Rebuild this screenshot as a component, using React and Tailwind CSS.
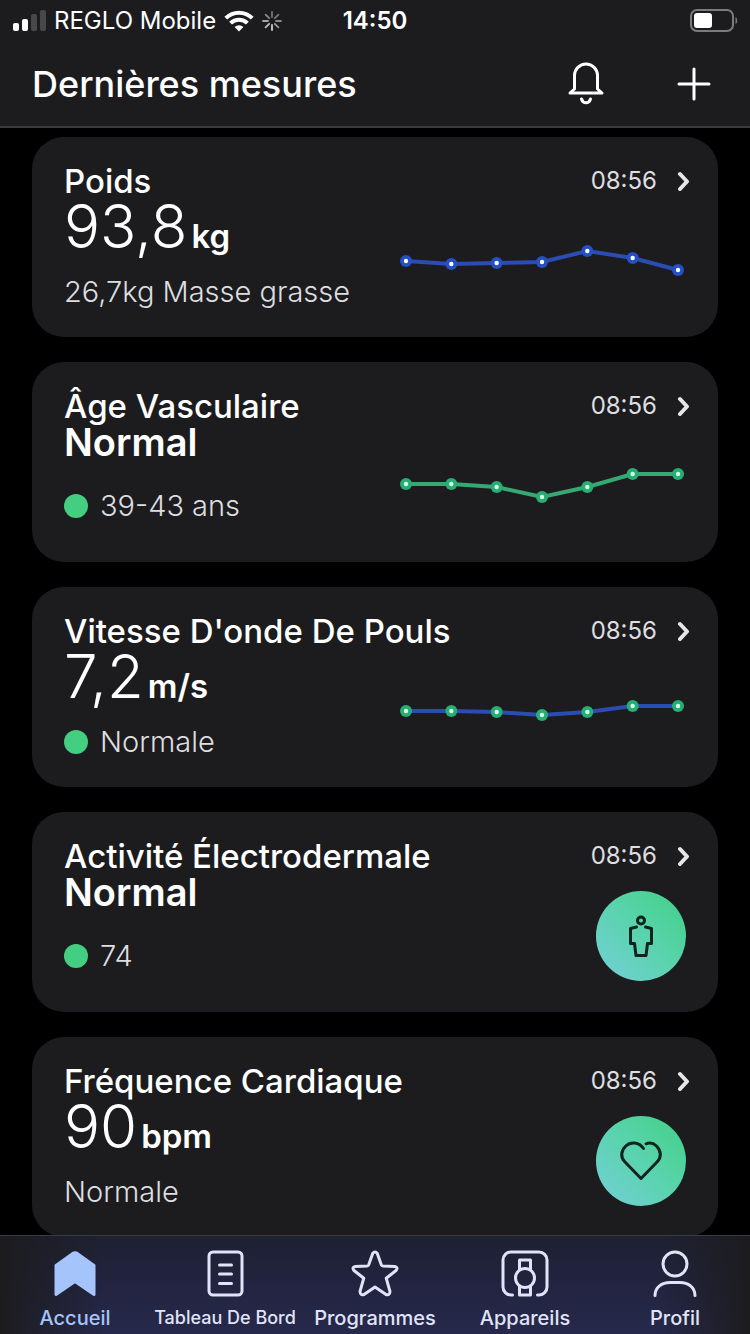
import React from "react";

const measures = [
  {
    title: "Poids",
    value: "93,8",
    unit: "kg",
    detail: "26,7kg Masse grasse",
    chart: { line: "#2b4cb3", dot: "#2450c4", center: "#ffffff", points: [40, 43, 42, 41, 30, 37, 49] },
  },
  {
    title: "Âge Vasculaire",
    status: "Normal",
    detail: "39-43 ans",
    dot: true,
    chart: { line: "#36a873", dot: "#27ae74", center: "#d5ffe6", points: [38, 38, 41, 51, 41, 28, 28] },
  },
  {
    title: "Vitesse D'onde De Pouls",
    value: "7,2",
    unit: "m/s",
    detail: "Normale",
    dot: true,
    chart: { line: "#2b4cb3", dot: "#27ae74", center: "#d5ffe6", points: [40, 40, 41, 44, 41, 35, 35] },
  },
  {
    title: "Activité Électrodermale",
    status: "Normal",
    detail: "74",
    dot: true,
    icon: "body",
  },
  {
    title: "Fréquence Cardiaque",
    value: "90",
    unit: "bpm",
    detail: "Normale",
    icon: "heart",
  },
];

const tabs = [
  { label: "Accueil", icon: "home", active: true },
  { label: "Tableau De Bord", icon: "board", long: true },
  { label: "Programmes", icon: "star" },
  { label: "Appareils", icon: "watch" },
  { label: "Profil", icon: "user" },
];

const StatusBar = () => {
  return (
    <div className="grid h-[42px] grid-cols-[1fr_auto_1fr] items-center px-3 text-2xl">
      <div className="flex items-center gap-2">
        <svg width="34" height="22" viewBox="0 0 34 22" fill="#ffffff">
          <rect x="1" y="13" width="6" height="8" rx="2" />
          <rect x="10" y="9" width="6" height="12" rx="2" />
          <rect x="19" y="4" width="6" height="17" rx="2" fill="#48484a" />
          <rect x="28" y="0" width="6" height="21" rx="2" fill="#48484a" />
        </svg>
        <span className="whitespace-nowrap">REGLO Mobile</span>
        <svg width="30" height="22" viewBox="0 0 30 22" fill="none" stroke="#ffffff" strokeWidth="4">
          <path d="M1.8 8.2a18.6 18.6 0 0 1 26.4 0" />
          <path d="M6.6 13.2a11.8 11.8 0 0 1 16.8 0" />
          <path d="M15 21.5l-4.4-4.4a6.2 6.2 0 0 1 8.8 0z" fill="#ffffff" stroke="none" />
        </svg>
        <svg
          width="20"
          height="20"
          viewBox="0 0 20 20"
          stroke="#a5a5a7"
          strokeWidth="1.8"
          strokeLinecap="round"
        >
          <path d="M10 1v5" stroke="#77777a" />
          <path d="M16.4 3.6l-3.6 3.6" stroke="#77777a" />
          <path d="M19 10h-5" stroke="#88888a" />
          <path d="M16.4 16.4l-3.6-3.6" stroke="#98989a" />
          <path d="M10 19v-5" stroke="#d0d0d2" />
          <path d="M3.6 16.4l3.6-3.6" stroke="#c0c0c2" />
          <path d="M1 10h5" />
          <path d="M3.6 3.6l3.6 3.6" stroke="#88888a" />
        </svg>
      </div>
      <span className="font-semibold">14:50</span>
      <svg className="justify-self-end" width="48" height="24" viewBox="0 0 48 24">
        <rect x="1" y="1" width="42" height="21" rx="6" fill="none" stroke="#7b7b7d" strokeWidth="2" />
        <rect x="4" y="4" width="18" height="15" rx="3" fill="#ffffff" />
        <path d="M45.500 8c2.300 1 2.300 6 0 7z" fill="#7b7b7d" />
      </svg>
    </div>
  );
};

const Header = () => {
  return (
    <header className="border-b-2 border-[#3b3b3e] bg-[#1c1c1e]">
      <StatusBar />
      <div className="flex h-[84px] items-center justify-between pr-[38px] pl-8">
        <h1 className="text-4xl leading-10 font-medium">Dernières mesures</h1>
        <div className="flex items-center gap-[68px]">
          <button type="button" aria-label="Notifications">
            <svg
              width="44"
              height="44"
              viewBox="0 0 44 44"
              fill="none"
              stroke="#ffffff"
              strokeWidth="3"
              strokeLinecap="round"
              strokeLinejoin="round"
            >
              <path d="M10.500 27V13.500a11.500 11.500 0 0 1 23 0V27l4.500 4H6z" />
              <path d="M17.500 37c1.500 5 7.500 5 9 0" />
            </svg>
          </button>
          <button type="button" aria-label="Ajouter">
            <svg
              width="36"
              height="36"
              viewBox="0 0 36 36"
              stroke="#ffffff"
              strokeWidth="3"
              strokeLinecap="round"
            >
              <path d="M18 3v30M3 18h30" />
            </svg>
          </button>
        </div>
      </div>
    </header>
  );
};

const Chart = ({ line, dot, center, points }) => {
  const coords = points.map((y, i) => [6 + (i * 272) / 6, y]);

  return (
    <svg className="mt-5 shrink-0" width="286" height="80" viewBox="0 0 286 80">
      <polyline
        points={coords.map((c) => c.join(",")).join(" ")}
        fill="none"
        stroke={line}
        strokeWidth="4"
      />
      {coords.map(([x, y]) => (
        <g key={x}>
          <circle cx={x} cy={y} r="6" fill={dot} />
          <circle cx={x} cy={y} r="2.2" fill={center} />
        </g>
      ))}
    </svg>
  );
};

const Badge = ({ icon }) => {
  return (
    <div className="mt-[15px] flex size-[90px] shrink-0 items-center justify-center rounded-full bg-linear-to-tr from-[#74cfd8] via-[#5ad3ae] to-[#3fd184]">
      <svg
        width="44"
        height="44"
        viewBox="0 0 44 44"
        fill="none"
        stroke="#10241f"
        strokeWidth="3"
        strokeLinecap="round"
        strokeLinejoin="round"
      >
        {icon === "body" ? (
          <>
            <circle cx="22" cy="6.500" r="3.500" />
            <path d="M17.500 13L11.500 14.500V29.500H15.500L17 41.500H27L28.500 29.500H32.500V14.500L26.500 13" />
          </>
        ) : (
          <path d="M24.500 9.500C20 2.800 11.500 2.500 6.800 7C1.500 12 1.500 18.500 6 23L22 39.500L38 23C42.500 18.500 42.500 12 37.500 7C34.500 4.200 30.500 3.500 27 4.800" />
        )}
      </svg>
    </div>
  );
};

const MeasureCard = ({ title, value, unit, status, detail, dot, chart, icon }) => {
  return (
    <a href="#" className="block min-h-[200px] rounded-[32px] bg-[#1c1c1e] px-8 pt-6">
      <div className="flex items-center justify-between">
        <h2 className="text-[33px] leading-10 font-medium">{title}</h2>
        <div className="-mr-1 flex items-center gap-5 text-2xl text-[#dedee0]">
          <time>08:56</time>
          <svg
            width="13"
            height="20"
            viewBox="0 0 13 20"
            fill="none"
            stroke="#e6e6e8"
            strokeWidth="4"
            strokeLinecap="round"
            strokeLinejoin="round"
          >
            <path d="M3 3l7 7.500L3 18" />
          </svg>
        </div>
      </div>
      <div className="flex justify-between">
        <div>
          {status ? (
            <p className="mb-8 text-[38px] leading-8 font-semibold">{status}</p>
          ) : (
            <p className="mb-6 flex items-baseline gap-1 text-[60px] leading-[50px] font-light">
              {value}
              <span className="text-[33px] leading-8 font-semibold">{unit}</span>
            </p>
          )}
          <p className="flex items-center gap-3 text-[29px] leading-8 font-light text-[#dedee0]">
            {dot && <span className="size-6 rounded-full bg-[#44ce82]" />}
            {detail}
          </p>
        </div>
        {chart && <Chart {...chart} />}
        {icon && <Badge icon={icon} />}
      </div>
    </a>
  );
};

const TabIcon = ({ icon }) => {
  return (
    <svg
      width="48"
      height="48"
      viewBox="0 0 48 48"
      fill="none"
      stroke="currentColor"
      strokeWidth="3"
      strokeLinecap="round"
      strokeLinejoin="round"
    >
      {icon === "home" && (
        <path
          d="M5 15.500L21.500 3.600Q24 2 26.500 3.600L43 15.500V44.500L24 31.500L5 44.500Z"
          fill="currentColor"
        />
      )}
      {icon === "board" && (
        <>
          <rect x="8" y="2" width="33" height="43" rx="4" />
          <path d="M18.500 15h12M18.500 24h12M18.500 33.500h12" />
        </>
      )}
      {icon === "star" && (
        <path d="M21.800 3.300Q24 .800 26.200 3.300L30.300 14.800Q30.800 15.800 32 15.900L43.800 16.400Q47.500 17.400 45 20.500L35.200 28.200L39 41.500Q38.700 45.700 35 44.500L24 37L13 44.500Q9.300 45.700 9 41.500L12.800 28.200L3 20.500Q.500 17.400 4.200 16.400L16 15.900Q17.200 15.800 17.700 14.800Z" />
      )}
      {icon === "watch" && (
        <>
          <path d="M11.500 45H10A8 8 0 0 1 2 37V10A8 8 0 0 1 10 2H38A8 8 0 0 1 46 10V37A8 8 0 0 1 38 45H36.500" />
          <circle cx="24" cy="28" r="9.500" />
          <path d="M18.500 19.500V10H29.500V19.500M18.500 36.500V45H29.500V36.500" />
        </>
      )}
      {icon === "user" && (
        <>
          <circle cx="24" cy="14" r="12" />
          <path d="M4 45.500C4 37 11 32.500 19 32.500H29C37 32.500 44 37 44 45.500" />
        </>
      )}
    </svg>
  );
};

const TabBar = () => {
  return (
    <nav className="border-t border-[#3a3a42] bg-[linear-gradient(90deg,#1c1c1e_0%,#1c1c1e00_14%,#1c1c1e00_88%,#1c1c1e_100%),linear-gradient(180deg,#1e2132_0%,#222440_50%,#27294c_100%)]">
      <ul className="grid grid-cols-5">
        {tabs.map(({ label, icon, active, long }) => (
          <li key={label}>
            <a
              href="#"
              className={
                active
                  ? "flex flex-col items-center gap-2 pt-3.5 pb-1 text-[#a5c4fb]"
                  : "flex flex-col items-center gap-2 pt-3.5 pb-1 text-[#e1e4f8]"
              }
            >
              <TabIcon icon={icon} />
              <span
                className={
                  long
                    ? "text-lg leading-6 font-medium whitespace-nowrap"
                    : "text-xl leading-6 font-medium whitespace-nowrap"
                }
              >
                {label}
              </span>
            </a>
          </li>
        ))}
      </ul>
    </nav>
  );
};

const App = () => {
  return (
    <div className="flex h-screen flex-col bg-black font-['Inter',sans-serif] text-white">
      <Header />
      <main className="flex min-h-0 flex-1 flex-col gap-[25px] overflow-y-auto px-8 pt-[9px] [scrollbar-width:none]">
        {measures.map((measure) => (
          <MeasureCard key={measure.title} {...measure} />
        ))}
      </main>
      <TabBar />
    </div>
  );
};

export default App;
